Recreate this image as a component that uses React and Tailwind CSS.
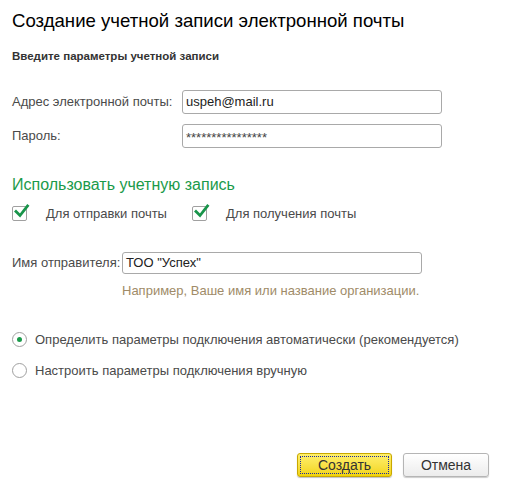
const Check = () => (
  <span className="w-[15px] h-[15px] border border-[#a0a0a0] rounded-[2px] bg-white relative inline-block shrink-0">
    <svg width="16" height="14" viewBox="0 0 16 14" className="absolute left-[1px] top-[-3px]">
      <path d="M2 7.5 L6 11.5 L13.5 2" fill="none" stroke="#18944a" strokeWidth="2.8" strokeLinecap="square" />
    </svg>
  </span>
)

const Radio = ({ on }) => (
  <span className="w-[15px] h-[15px] rounded-full border border-[#a0a0a0] bg-white flex items-center justify-center shrink-0">
    {on && <span className="w-[5px] h-[5px] rounded-full bg-[#1a9a4a]" />}
  </span>
)

export default function App() {
  return (
    <div
      className="w-[506px] h-[492px] bg-white text-[13px] text-[#4a4a4a] relative"
      style={{ fontFamily: '"Liberation Sans", Arial, sans-serif' }}
    >
      <div className="pl-[12px] pt-[9px]">
        <h1 className="text-[18.6px] leading-[24px] text-black">Создание учетной записи электронной почты</h1>
        <p className="mt-[16px] text-[11.5px] font-bold text-[#333] leading-[14px]">Введите параметры учетной записи</p>

        {/* account fields */}
        <div className="mt-[27px] flex flex-col gap-[10px]">
          <div className="flex items-center">
            <span className="w-[170px]">Адрес электронной почты:</span>
            <div className="w-[260px] h-[24px] border border-[#a9a9a9] rounded-[3px] flex items-center px-[3px] text-[13px] text-[#222]">
              uspeh@mail.ru
            </div>
          </div>
          <div className="flex items-center">
            <span className="w-[170px]">Пароль:</span>
            <div className="w-[260px] h-[24px] border border-[#a9a9a9] rounded-[3px] flex items-start pt-[3px] px-[3px] text-[13px] text-[#444]">
              ****************
            </div>
          </div>
        </div>

        <h2 className="mt-[27px] text-[16px] leading-[20px] text-[#1a9a4a]">Использовать учетную запись</h2>
        <div className="mt-[9px] flex items-center">
          <Check />
          <span className="ml-[19px] w-[146px]">Для отправки почты</span>
          <Check />
          <span className="ml-[19px]">Для получения почты</span>
        </div>

        {/* sender */}
        <div className="mt-[28px] flex items-center">
          <span className="w-[110px]">Имя отправителя:</span>
          <div className="w-[300px] h-[22px] border border-[#a9a9a9] rounded-[3px] flex items-center px-[3px] text-[#222]">
            ТОО "Успех"
          </div>
        </div>
        <p className="ml-[110px] mt-[7px] text-[#a08b68]">Например, Ваше имя или название организации.</p>

        {/* connection settings */}
        <div className="mt-[30px] flex flex-col gap-[11px]">
          <label className="flex items-center gap-[8px]">
            <Radio on />
            <span>Определить параметры подключения автоматически (рекомендуется)</span>
          </label>
          <label className="flex items-center gap-[8px]">
            <Radio />
            <span>Настроить параметры подключения вручную</span>
          </label>
        </div>
      </div>

      <div className="absolute left-[297px] top-[453px] flex gap-[11px]">
        <button className="w-[95px] h-[24px] rounded-[3px] border border-[#c9a800] bg-gradient-to-b from-[#fff06a] to-[#f2d400] p-[2px] shadow-[0_1px_1px_rgba(0,0,0,0.25)]">
          <span className="w-full h-full flex items-center justify-center border border-dotted border-[#1b2aa0] text-[14px] text-[#333]">Создать</span>
        </button>
        <button className="w-[86px] h-[24px] rounded-[3px] border border-[#b5b5b5] bg-gradient-to-b from-white to-[#ececec] text-[14px] text-[#333] shadow-[0_1px_1px_rgba(0,0,0,0.2)]">
          Отмена
        </button>
      </div>
    </div>
  )
}
